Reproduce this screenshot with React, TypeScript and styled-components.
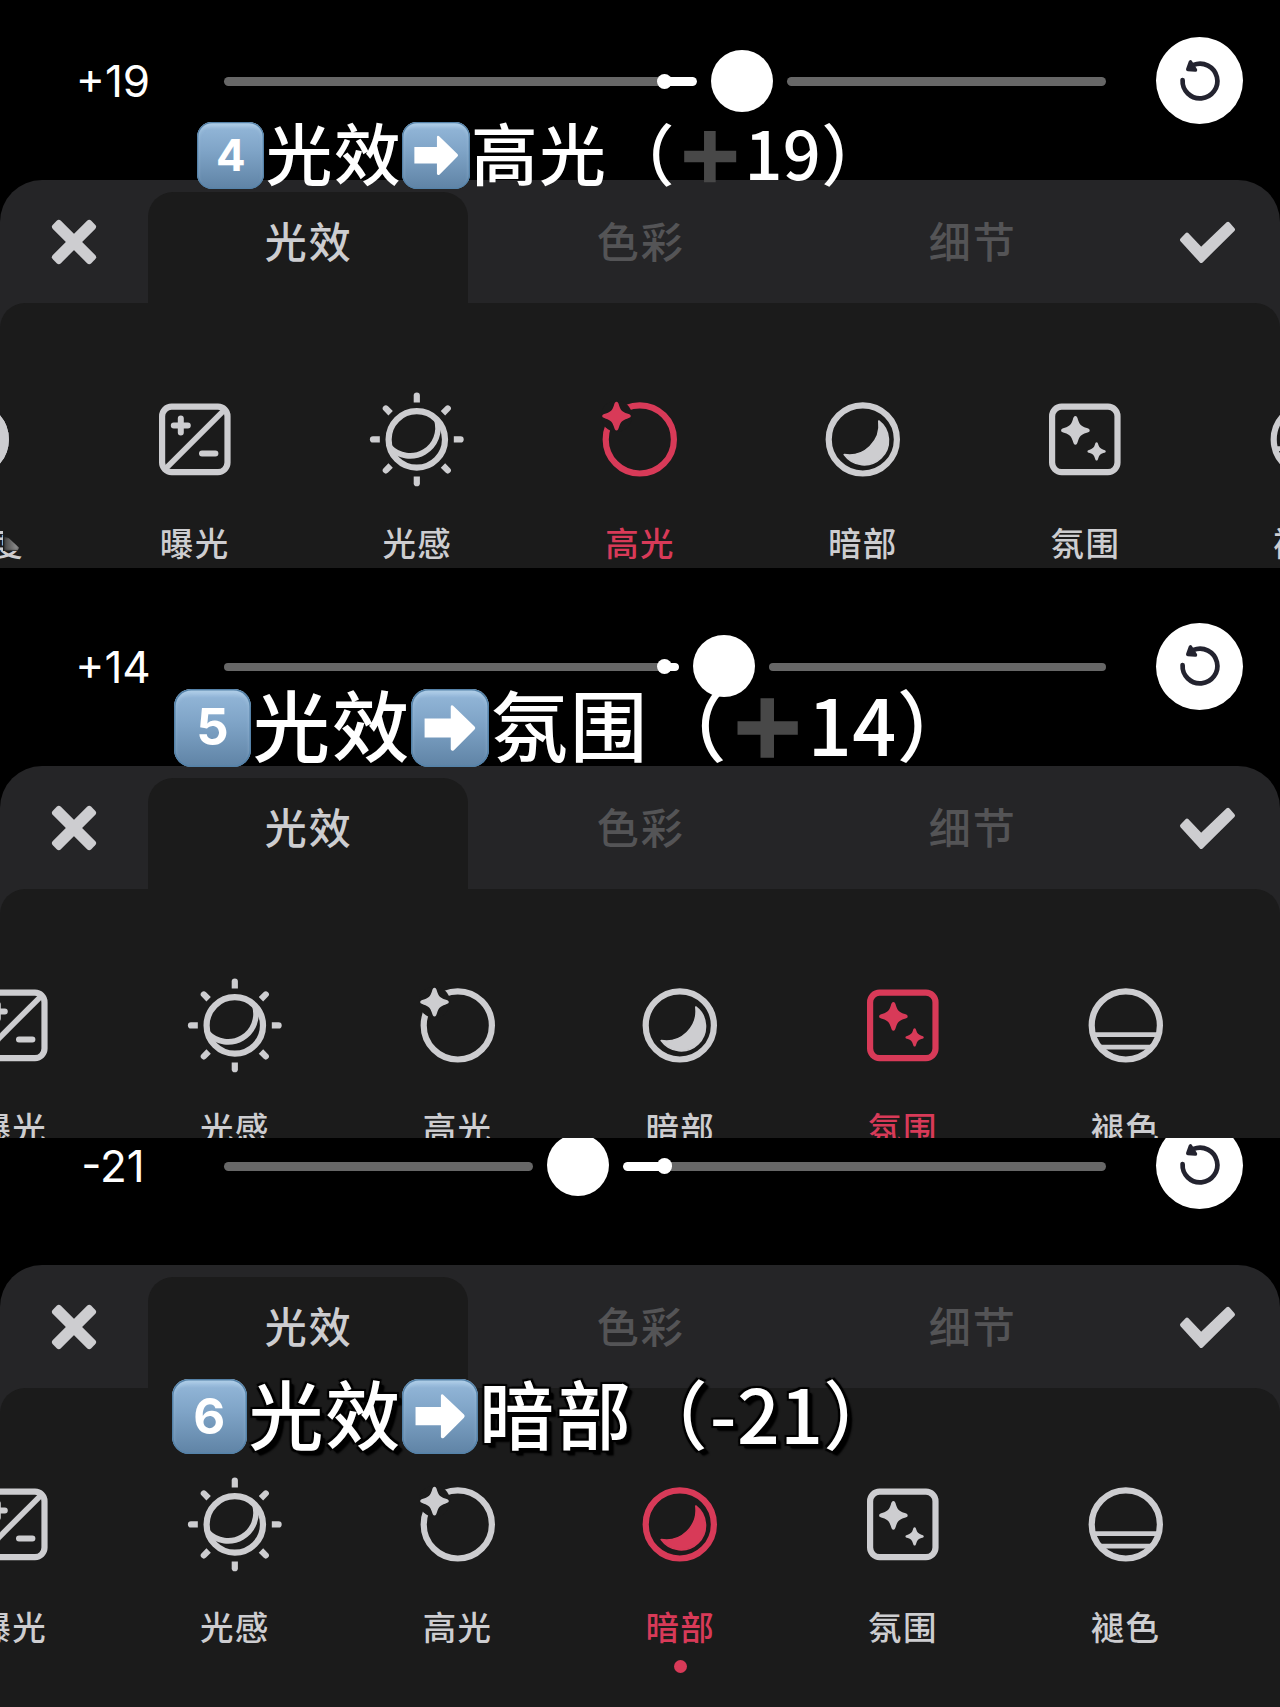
import React from "react";
import styled, { createGlobalStyle, css } from "styled-components";

const GRAY = "#cdcdd0";
const RED = "#d83a58";
const BODY = "#1b1b1b";
const CJK = `"Noto Sans CJK SC", "Noto Sans", sans-serif`;

const GlobalStyle = createGlobalStyle`
  * { box-sizing: border-box; }
  html, body { margin: 0; background: #000; }
  body { width: 1280px; overflow: hidden; font-family: ${CJK}; }
`;

const Page = styled.main`
  width: 1280px;
  height: 1707px;
  overflow: hidden;
  background: #000;
`;

const Shot = styled.section<{ $height: number }>`
  position: relative;
  height: ${(p) => p.$height}px;
  overflow: hidden;
`;

const Editor = styled.div<{ $shift: number }>`
  display: flex;
  flex-direction: column;
  height: 640px;
  margin-top: ${(p) => p.$shift}px;
`;

const Controls = styled.div`
  display: grid;
  grid-template-columns: 224px 882px 174px;
  align-items: center;
  height: 161px;
  margin-bottom: 19px;
  flex: none;
`;

const Value = styled.div`
  padding: 1px 0 0 2px;
  text-align: center;
  color: #fff;
  font: 400 44px/50px Inter, "Liberation Sans", sans-serif;
`;

const Slider = styled.div`
  position: relative;
  display: flex;
  align-items: center;
  gap: 14px;
`;

const Segment = styled.div<{ $width?: number; $end?: boolean }>`
  display: flex;
  justify-content: ${(p) => (p.$end ? "flex-end" : "flex-start")};
  height: 8.6px;
  margin-top: 2px;
  border-radius: 5px;
  overflow: hidden;
  background: #676767;
  ${(p) => (p.$width ? css`flex: none; width: ${p.$width}px;` : css`flex: 1;`)}
`;

const Fill = styled.div<{ $width: number }>`
  width: ${(p) => p.$width}px;
  border-radius: 5px;
  background: #fff;
`;

const Thumb = styled.div`
  flex: none;
  width: 62px;
  height: 62px;
  border-radius: 50%;
  background: #fff;
`;

const Origin = styled.i`
  position: absolute;
  left: 433px;
  top: 24px;
  width: 15.4px;
  height: 15.4px;
  border-radius: 50%;
  background: #fff;
`;

const ResetButton = styled.button`
  display: grid;
  place-items: center;
  width: 87px;
  height: 87px;
  margin: 0 0 0 50.4px;
  padding: 0;
  border: 0;
  border-radius: 50%;
  background: #fff;
`;

const Panel = styled.div`
  flex: 1;
  display: flex;
  flex-direction: column;
  border-radius: 42px 42px 0 0;
  background: #252527;
  overflow: hidden;
`;

const TabBar = styled.div`
  display: grid;
  grid-template-columns: 142px repeat(3, 332px) 142px;
  height: 123px;
  flex: none;
`;

const Action = styled.button<{ $nudge: number }>`
  display: flex;
  align-items: center;
  justify-content: flex-start;
  padding: 1px 0 0 ${(p) => p.$nudge}px;
  border: 0;
  background: none;
`;

const Tab = styled.div<{ $active?: boolean }>`
  margin: 12px 6px 0;
  padding-top: 18px;
  border-radius: 25px 25px 0 0;
  background: ${(p) => (p.$active ? BODY : "transparent")};
  color: ${(p) => (p.$active ? GRAY : "#545456")};
  font-size: 42px;
  font-weight: 500;
  line-height: 60px;
  letter-spacing: 2px;
  text-indent: 1.5px;
  text-align: center;
`;

const Body = styled.div`
  flex: 1;
  padding-top: 86px;
  border-radius: 25px 25px 0 0;
  background: ${BODY};
  overflow: hidden;
`;

const ToolRow = styled.div<{ $start: number }>`
  display: flex;
  margin-left: ${(p) => p.$start}px;
`;

const Tool = styled.div<{ $active: boolean }>`
  flex: none;
  display: flex;
  flex-direction: column;
  align-items: center;
  width: 222.7px;
  color: ${(p) => (p.$active ? RED : GRAY)};
`;

const ToolLabel = styled.span`
  position: relative;
  margin-top: 32.5px;
  font-size: 33.5px;
  font-weight: 500;
  line-height: 40px;
  letter-spacing: 1.3px;
  white-space: nowrap;
`;

const Smudge = styled.i`
  position: absolute;
  right: -12px;
  top: -8px;
  width: 33px;
  height: 37px;
  background: ${BODY};
  &::after {
    content: "";
    position: absolute;
    left: 1px;
    bottom: 0;
    width: 15px;
    height: 14px;
    background: linear-gradient(to right, #444, #999);
    clip-path: polygon(0 0, 30% 10%, 100% 80%, 90% 100%, 0 100%);
    filter: blur(1.5px);
  }
`;

const ActiveDot = styled.i`
  width: 13px;
  height: 13px;
  margin-top: 13.7px;
  border-radius: 50%;
  background: ${RED};
`;

const Caption = styled.div<{ $size: number; $x: number; $y: number; $outlined?: boolean }>`
  position: absolute;
  left: ${(p) => p.$x}px;
  top: ${(p) => p.$y}px;
  display: flex;
  align-items: center;
  height: 1em;
  color: #fff;
  font-size: ${(p) => p.$size}px;
  font-weight: 500;
  line-height: 1;
  white-space: nowrap;
  text-shadow: ${(p) =>
    p.$outlined
      ? "-2px -2px 1px #000, 2px -2px 1px #000, -2px 2px 1px #000, 2px 2px 1px #000, 4px 4px 1px #000, 5px 5px 2px #000"
      : "none"};
`;

const CaptionText = styled.span<{ $tight?: boolean }>`
  padding-bottom: 0.12em;
  font-size: 0.975em;
  letter-spacing: ${(p) => (p.$tight ? "0.006em" : "0.0256em")};
`;

const Keycap = styled.span`
  display: grid;
  place-items: center;
  width: 0.98em;
  height: 0.98em;
  margin-right: 0.02em;
  border-radius: 0.22em;
  background: linear-gradient(#aecde9 0%, #8fb3d5 12%, #7ea3c6 45%, #5f83a5 100%);
  box-shadow: inset 0 0 0 0.02em #5582a8, inset 0 0.04em 0.05em 0.02em #b9d5ec66;
  text-shadow: none;
`;

const KeyDigit = styled.b`
  font: 700 0.64em/1 Inter, "Liberation Sans", sans-serif;
`;

const PlusMark = styled.svg`
  width: 1em;
  height: 1em;
`;

const CloseIcon = () => (
  <svg width="50" height="50" viewBox="-25 -25 50 50" fill={GRAY}>
    <rect x="-27.2" y="-5.7" width="54.4" height="11.4" rx="3" transform="rotate(45)" />
    <rect x="-27.2" y="-5.7" width="54.4" height="11.4" rx="3" transform="rotate(-45)" />
  </svg>
);

const CheckIcon = () => (
  <svg width="60" height="50" viewBox="0 0 60 50">
    <path
      d="M5 22.8 10 17.5 24.2 32.5 51 6.8 56 12.5 24.2 44Z"
      fill={GRAY}
      stroke={GRAY}
      strokeWidth="4"
      strokeLinejoin="round"
    />
  </svg>
);

const ResetIcon = () => (
  <svg width="50" height="50" viewBox="-25 -25 50 50" fill="none" stroke="#23232f">
    <path d="M-17.4-1A17.4 17.4 0 1 0-6.5-16.1" strokeWidth="4.7" strokeLinecap="round" />
    <path d="M-9.6-19-12.2-11.6-4.6-11Z" fill="#23232f" strokeWidth="3.6" strokeLinejoin="round" />
  </svg>
);

const STAR =
  "M0-14.3C1.4-14.3 1.9-13 2.6-10.6C4-6 6-4 10.6-2.6C13-1.9 14.3-1.4 14.3 0C14.3 1.4 13 1.9 10.6 2.6C6 4 4 6 2.6 10.6C1.9 13 1.4 14.3 0 14.3C-1.4 14.3-1.9 13-2.6 10.6C-4 6-6 4-10.6 2.6C-13 1.9-14.3 1.4-14.3 0C-14.3-1.4-13-1.9-10.6-2.6C-6-4-4-6-2.6-10.6C-1.9-13-1.4-14.3 0-14.3Z";

const Star = ({ x, y, scale = 1 }: { x: number; y: number; scale?: number }) => (
  <path d={STAR} transform={`translate(${x} ${y}) scale(${scale})`} fill="currentColor" stroke="none" />
);

const glyphs = {
  contrast: (
    <>
      <circle r="34" />
      <path d="M0-34A34 34 0 0 1 0 34Z" fill="currentColor" />
    </>
  ),
  exposure: (
    <>
      <rect x="-32.7" y="-32.7" width="65.4" height="65.4" rx="9.5" />
      <path d="M-29.5 29.5 29.5-29.5" strokeWidth="5.6" />
      <path d="M-14-20.8V-6.8M-21-13.8H-7M7.2 14H20.6" strokeWidth="6" strokeLinecap="round" />
    </>
  ),
  brilliance: (
    <>
      <circle r="28.2" />
      <path d="M19.9-19.9A28 28 0 0 1-27 7.9" strokeWidth="5.6" />
      {[0, 45, 90, 135, 180, 225, 270, 315].map((a) => (
        <path
          key={a}
          d="M-3.1-37V-43.8a3.1 3.1 0 0 1 6.2 0V-37Z"
          transform={`rotate(${a})`}
          fill="currentColor"
          stroke="none"
        />
      ))}
    </>
  ),
  highlights: (
    <>
      <circle r="34.1" />
      <circle cx="-23.3" cy="-23.3" r="15.6" fill={BODY} stroke="none" />
      <Star x={-23.3} y={-23.3} />
    </>
  ),
  shadows: (
    <>
      <circle r="34.1" />
      <path
        d="M16-18.4A24.4 24.4 0 1 1-18.6 15.2A30 30 0 0 0 16-18.4Z"
        fill="currentColor"
        strokeWidth="1.6"
        strokeLinejoin="round"
      />
    </>
  ),
  ambience: (
    <>
      <rect x="-32.7" y="-32.7" width="65.4" height="65.4" rx="9.5" />
      <Star x={-9.4} y={-9} />
      <Star x={11.8} y={12} scale={0.64} />
    </>
  ),
  fade: (
    <>
      <circle r="34.1" />
      <path d="M-32 9.2H32M-26 21.8H26" strokeWidth="4.8" />
    </>
  ),
};

type ToolName = keyof typeof glyphs;

const labels: Record<ToolName, string> = {
  contrast: "对比度",
  exposure: "曝光",
  brilliance: "光感",
  highlights: "高光",
  shadows: "暗部",
  ambience: "氛围",
  fade: "褪色",
};

const order = Object.keys(glyphs) as ToolName[];

const ToolIcon = ({ name }: { name: ToolName }) => (
  <svg width="100" height="100" viewBox="-50 -50 100 100" fill="none" stroke="currentColor" strokeWidth="6.2">
    <g transform="translate(-0.2 0.4)">{glyphs[name]}</g>
  </svg>
);

const CENTER = 440.5;

const ValueSlider = ({ thumb }: { thumb: number }) => {
  const left = thumb - 45;
  const right = thumb + 45;
  return (
    <Slider>
      <Segment $width={left} $end>
        {left > CENTER && <Fill $width={left - CENTER} />}
      </Segment>
      <Thumb />
      <Segment>{right < CENTER && <Fill $width={CENTER - right} />}</Segment>
      <Origin />
    </Slider>
  );
};

type ShotProps = {
  height: number;
  shift: number;
  value: string;
  thumb: number;
  active: ToolName;
  scrolled?: boolean;
  children: React.ReactNode;
};

const EditorShot = ({ height, shift, value, thumb, active, scrolled, children }: ShotProps) => (
  <Shot $height={height}>
    <Editor $shift={shift}>
      <Controls>
        <Value>{value}</Value>
        <ValueSlider thumb={thumb} />
        <ResetButton aria-label="重置">
          <ResetIcon />
        </ResetButton>
      </Controls>
      <Panel>
        <TabBar>
          <Action $nudge={48.8} aria-label="关闭">
            <CloseIcon />
          </Action>
          <Tab $active>光效</Tab>
          <Tab>色彩</Tab>
          <Tab>细节</Tab>
          <Action $nudge={39} aria-label="完成">
            <CheckIcon />
          </Action>
        </TabBar>
        <Body>
          <ToolRow $start={scrolled ? -99.2 : -139.4}>
            {(scrolled ? order.slice(1) : order).map((name) => (
              <Tool key={name} $active={name === active}>
                <ToolIcon name={name} />
                <ToolLabel>
                  {labels[name]}
                  {name === "contrast" && <Smudge />}
                </ToolLabel>
                {name === active && <ActiveDot />}
              </Tool>
            ))}
          </ToolRow>
        </Body>
      </Panel>
    </Editor>
    {children}
  </Shot>
);

const Digit = ({ children }: { children: string }) => (
  <Keycap>
    <KeyDigit>{children}</KeyDigit>
  </Keycap>
);

const Arrow = () => (
  <Keycap>
    <svg width="0.68em" height="0.68em" viewBox="0 0 68 68" fill="#fff">
      <path d="M2 22H35V7Q36 4 39 7L65 32Q67 34 65 36L39 62Q36 64 35 61V46H2Z" />
    </svg>
  </Keycap>
);

const Plus = () => (
  <PlusMark viewBox="0 0 100 100" fill="#484848">
    <path d="M41 13H58V42H88V59H58V88H41V59H12V42H41Z" />
  </PlusMark>
);

export default function App() {
  return (
    <Page>
      <GlobalStyle />
      <EditorShot height={568} shift={0} value="+19" thumb={518.3} active="highlights">
        <Caption $size={68.4} $x={197.3} $y={121.5}>
          <Digit>4</Digit>
          <CaptionText>光效</CaptionText>
          <Arrow />
          <CaptionText>高光（</CaptionText>
          <Plus />
          <CaptionText $tight>19）</CaptionText>
        </Caption>
      </EditorShot>
      <EditorShot height={570} shift={17.6} value="+14" thumb={499.6} active="ambience" scrolled>
        <Caption $size={79.3} $x={173.5} $y={120}>
          <Digit>5</Digit>
          <CaptionText>光效</CaptionText>
          <Arrow />
          <CaptionText>氛围（</CaptionText>
          <Plus />
          <CaptionText $tight>14）</CaptionText>
        </Caption>
      </EditorShot>
      <EditorShot height={569} shift={-53.3} value="-21" thumb={354.2} active="shadows" scrolled>
        <Caption $size={76.9} $x={171.5} $y={239.8} $outlined>
          <Digit>6</Digit>
          <CaptionText>光效</CaptionText>
          <Arrow />
          <CaptionText>暗部（</CaptionText>
          <CaptionText $tight>-21）</CaptionText>
        </Caption>
      </EditorShot>
    </Page>
  );
}
